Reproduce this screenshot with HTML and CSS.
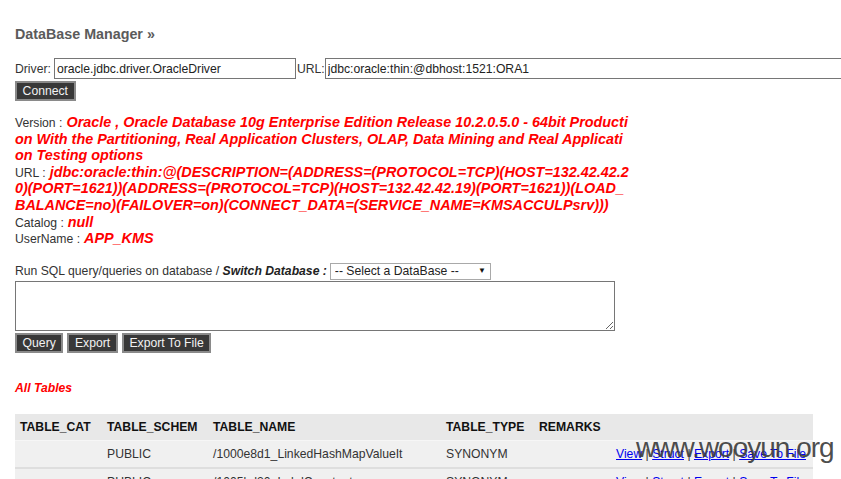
FILE: index.html
```html
<!DOCTYPE html>
<html>
<head>
<meta charset="utf-8">
<title>DataBase Manager</title>
<link rel="stylesheet" href="styles.css">
</head>
<body>
<div class="page">
  <h1 class="title">DataBase Manager &raquo;</h1>
  <div class="conn-row">
    <span class="lbl">Driver:</span>
    <input class="field driver" type="text" value="oracle.jdbc.driver.OracleDriver">
    <span class="lbl url-lbl">URL:</span>
    <input class="field url" type="text" value="jdbc:oracle:thin:@dbhost:1521:ORA1">
  </div>
  <div class="btn-row first">
    <button class="btn">Connect</button>
  </div>

  <div class="info">
    <span class="lbl">Version :</span> <span class="val">Oracle , Oracle Database 10g Enterprise Edition Release 10.2.0.5.0 - 64bit Production With the Partitioning, Real Application Clusters, OLAP, Data Mining and Real Application Testing options</span><br>
    <span class="lbl">URL :</span> <span class="val">jdbc:oracle:thin:@(DESCRIPTION=(ADDRESS=(PROTOCOL=TCP)(HOST=132.42.42.20)(PORT=1621))(ADDRESS=(PROTOCOL=TCP)(HOST=132.42.42.19)(PORT=1621))(LOAD_BALANCE=no)(FAILOVER=on)(CONNECT_DATA=(SERVICE_NAME=KMSACCULPsrv)))</span><br>
    <span class="lbl">Catalog :</span> <span class="val">null</span><br>
    <span class="lbl">UserName :</span> <span class="val">APP_KMS</span>
  </div>

  <div class="sql-row">
    <span class="lbl">Run SQL query/queries on database / <b class="sw">Switch Database :</b></span>
    <span class="select-wrap">
      <select class="select"><option>-- Select a DataBase --</option></select>
    </span>
  </div>
  <textarea class="sql"></textarea>
  <div class="btn-row">
    <button class="btn">Query</button>
    <button class="btn">Export</button>
    <button class="btn">Export To File</button>
  </div>

  <p class="all">All Tables</p>

  <table class="tables">
    <thead>
      <tr>
        <th class="c1">TABLE_CAT</th>
        <th class="c2">TABLE_SCHEM</th>
        <th class="c3">TABLE_NAME</th>
        <th class="c4">TABLE_TYPE</th>
        <th class="c5">REMARKS</th>
        <th class="c6"></th>
      </tr>
    </thead>
    <tbody>
      <tr>
        <td></td>
        <td>PUBLIC</td>
        <td>/1000e8d1_LinkedHashMapValueIt</td>
        <td>SYNONYM</td>
        <td></td>
        <td class="acts"><a href="#">View</a> | <a href="#">Struct</a> | <a href="#">Export</a> | <a href="#">Save To File</a></td>
      </tr>
      <tr>
        <td></td>
        <td>PUBLIC</td>
        <td>/1005bd30_LnkdConstant</td>
        <td>SYNONYM</td>
        <td></td>
        <td class="acts"><a href="#">View</a> | <a href="#">Struct</a> | <a href="#">Export</a> | <a href="#">Save To File</a></td>
      </tr>
    </tbody>
  </table>

  <div class="watermark">www.wooyun.org</div>
</div>
</body>
</html>
```
FILE: styles.css
```css
html, body {
  margin: 0;
  padding: 0;
  background: #fff;
  overflow: hidden;
}
body {
  font-family: "Liberation Sans", Arial, sans-serif;
  font-size: 12.2px;
  color: #333;
}
.page {
  position: relative;
  padding: 0 15px;
  height: 479px;
}
.title {
  margin: 0;
  padding-top: 26px;
  font-size: 14.3px;
  line-height: 16px;
  font-weight: bold;
  color: #5b5b5b;
}
.conn-row {
  display: flex;
  align-items: center;
  white-space: nowrap;
  margin-top: 16px;
  height: 21px;
}
.lbl {
  color: #333;
}
.field {
  box-sizing: border-box;
  flex: none;
  height: 21px;
  border: 1px solid #767676;
  padding: 0 2px;
  margin: 0;
  font-family: "Liberation Sans", Arial, sans-serif;
  font-size: 12.2px;
  color: #222;
  background: #fff;
}
.driver {
  width: 242px;
  margin-left: 3px;
  margin-right: 1px;
}
.url {
  width: 540px;
}
.btn-row {
  display: flex;
  gap: 4px;
  margin-top: 2px;
}
.btn {
  box-sizing: border-box;
  height: 20px;
  padding: 0 5.6px;
  margin: 0;
  border: 2px solid #8a8a8a;
  background: #383838;
  color: #f2f2f2;
  font-family: "Liberation Sans", Arial, sans-serif;
  font-size: 12.2px;
  line-height: 16px;
}
.info {
  width: 615px;
  margin-top: 13px;
  font-size: 14.4px;
  line-height: 16.6px;
  word-break: break-all;
}
.info .lbl {
  font-size: 12.2px;
  line-height: 12px;
}
.val {
  color: #f00;
  font-weight: bold;
  font-style: italic;
}
.sql-row {
  display: flex;
  align-items: center;
  height: 19px;
  margin-top: 15px;
}
.sw {
  font-style: italic;
  color: #222;
}
.select-wrap {
  position: relative;
  display: inline-block;
  margin-left: 3px;
}
.select {
  -webkit-appearance: none;
  appearance: none;
  box-sizing: border-box;
  width: 161px;
  height: 17px;
  margin: 0;
  padding: 0 0 0 4px;
  border: 1px solid #a9a9a9;
  border-radius: 0;
  background: #fff;
  font-family: "Liberation Sans", Arial, sans-serif;
  font-size: 12.2px;
  line-height: 15px;
  color: #222;
}
.select-wrap::after {
  content: "\25BC";
  position: absolute;
  right: 5px;
  top: 3px;
  font-size: 8px;
  line-height: 10px;
  color: #111;
  pointer-events: none;
}
.sql {
  display: block;
  box-sizing: border-box;
  width: 600px;
  height: 50px;
  margin: 0;
  border: 1px solid #767676;
  padding: 2px;
  font-family: "Liberation Mono", monospace;
  font-size: 12px;
}
.all {
  margin: 28px 0 0;
  color: #f00;
  font-weight: bold;
  font-style: italic;
  line-height: 14px;
}
.tables {
  margin-top: 19px;
  width: 798px;
  border-collapse: collapse;
  table-layout: fixed;
}
.tables th, .tables td {
  text-align: left;
  padding: 0 0 0 5px;
  height: 26px;
  white-space: nowrap;
  overflow: hidden;
}
.tables th {
  background: #e8e8e8;
  color: #111;
  font-weight: bold;
  border-bottom: 1px solid #f6f6f6;
}
.tables td {
  background: #f0f0f0;
  color: #333;
  border-bottom: 2px solid #dedede;
}
.tables tbody tr + tr td {
  border-top: 1px solid #fff;
}
.c1 { width: 82px; }
.c2 { width: 101px; }
.c3 { width: 228px; }
.c4 { width: 88px; }
.c5 { width: 72px; }
.c6 { width: 197px; }
.acts a {
  color: #00e;
  text-decoration: underline;
}
.watermark {
  position: absolute;
  left: 636px;
  top: 434px;
  font-family: "Liberation Sans", Arial, sans-serif;
  font-size: 28px;
  line-height: 28px;
  letter-spacing: -1px;
  color: rgba(60, 60, 60, 0.92);
  pointer-events: none;
}
```
